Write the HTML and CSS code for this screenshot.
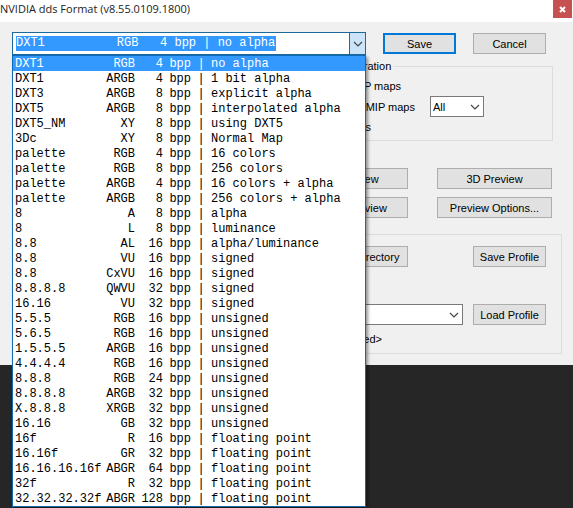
FILE: index.html
```html
<!DOCTYPE html>
<html lang="en">
<head>
    <meta charset="UTF-8">
    <meta name="viewport" content="width=device-width, initial-scale=1.0">
    <title>NVIDIA dds Format</title>
    <link rel="stylesheet" href="styles.css">
</head>
<body>
    <div class="dialog">
        <header class="title-bar">
            <h1>NVIDIA dds Format (v8.55.0109.1800)</h1>
            <button type="button" class="close-btn" aria-label="Close">
                <svg width="7" height="7" viewBox="0 0 7 7"><path d="M1 1L6 6M6 1L1 6" stroke="#fff" stroke-width="2"/></svg>
            </button>
        </header>

        <form class="dialog-body">
            <div class="top-row">
                <div class="combo">
                    <div class="combo-field">
                        <select class="format-select" aria-label="Texture format">
                            <option>DXT1&nbsp;&nbsp;&nbsp;&nbsp;&nbsp;&nbsp;&nbsp;&nbsp;&nbsp;&nbsp;RGB&nbsp;&nbsp;&nbsp;4&nbsp;bpp&nbsp;|&nbsp;no&nbsp;alpha</option>
                        </select>
                        <span class="combo-arrow">
                            <svg width="10" height="6" viewBox="0 0 10 6"><path d="M1 1L5 5L9 1" fill="none" stroke="#444" stroke-width="1.2"/></svg>
                        </span>
                    </div>
                    <ul class="format-list" id="format-list" role="listbox" aria-label="Texture formats"></ul>
                </div>
                <button type="submit" class="btn default-btn">Save</button>
                <button type="button" class="btn">Cancel</button>
            </div>

            <fieldset class="mip-group">
                <legend>MIP Map Generation</legend>
                <label class="mip-option generate"><input type="radio" name="mip" checked> Generate MIP maps</label>
                <div class="mip-row">
                    <label class="mip-option existing"><input type="radio" name="mip"> Use Existing MIP maps</label>
                    <select class="drop-select" aria-label="Number of MIP maps">
                        <option>All</option>
                    </select>
                </div>
                <label class="mip-option none"><input type="radio" name="mip"> No MIP maps</label>
            </fieldset>

            <div class="preview-grid">
                <button type="button" class="btn">2D Preview</button>
                <button type="button" class="btn">3D Preview</button>
                <button type="button" class="btn">Image Preview</button>
                <button type="button" class="btn">Preview Options...</button>
            </div>

            <section class="profile-group">
                <div class="profile-row">
                    <button type="button" class="btn directory-btn">Set Profile Directory</button>
                    <button type="button" class="btn">Save Profile</button>
                </div>
                <div class="profile-row load-row">
                    <select class="drop-select profile-select" aria-label="Profile"><option></option></select>
                    <button type="button" class="btn">Load Profile</button>
                </div>
                <p class="profile-status">&lt;no profile loaded&gt;</p>
            </section>
        </form>
    </div>

    <script src="script.js"></script>
</body>
</html>
```

FILE: styles.css
```css
body {
    margin: 0;
    min-height: 100vh;
    background-color: #262626;
    color: #000;
    font-family: "Liberation Sans", Arial, sans-serif;
    font-size: 11px;
}

button, select, input {
    font: inherit;
    color: inherit;
    box-sizing: border-box;
    margin: 0;
}

.dialog {
    background-color: #f0f0f0;
}

.title-bar {
    display: flex;
    justify-content: space-between;
    align-items: flex-start;
    height: 22px;
    padding-right: 1px;
    background-color: #fff;
}

.title-bar h1 {
    margin: 0;
    font-family: "Open Sans", "Noto Sans", sans-serif;
    font-size: 11px;
    font-weight: normal;
    line-height: 18px;
    color: #222;
}

.close-btn {
    display: flex;
    align-items: center;
    justify-content: center;
    width: 19px;
    height: 18px;
    padding: 0;
    border: none;
    background-color: #c75050;
}

.dialog-body {
    padding: 10px 11px 11px 12px;
}

.top-row {
    display: flex;
    align-items: center;
    gap: 17px;
    padding-right: 16px;
}

.btn {
    width: 73px;
    height: 21px;
    padding: 0;
    border: 1px solid #adadad;
    background-color: #e1e1e1;
}

.default-btn {
    border: 2px solid #0078d7;
}

/* format drop-down */
.combo {
    position: relative;
    flex: 1;
}

.combo-field {
    display: flex;
    align-items: center;
    justify-content: space-between;
    height: 23px;
    box-sizing: border-box;
    padding-left: 3px;
    border: 1px solid #1c6a9c;
    background-color: #fff;
}

.format-select {
    appearance: none;
    height: 15px;
    padding: 0;
    border: none;
    border-radius: 0;
    background-color: #3399ff;
    color: #fff;
    font-family: "Liberation Mono", "Courier New", monospace;
    font-size: 12px;
    line-height: 15px;
}

.combo-arrow {
    display: flex;
    align-items: center;
    justify-content: center;
    align-self: stretch;
    width: 15px;
    border-left: 1px solid #1c6a9c;
    background-color: #cce4f7;
}

.format-list {
    position: absolute;
    top: 100%;
    left: 0;
    right: 0;
    z-index: 1;
    margin: 0;
    padding: 0;
    border: 1px solid #0f6cb4;
    background-color: #fff;
    box-shadow: 2px 2px 3px rgba(0, 0, 0, 0.4);
    list-style: none;
    font-family: "Liberation Mono", "Courier New", monospace;
    font-size: 12px;
    line-height: 15px;
    white-space: nowrap;
}

.format-list li {
    display: grid;
    grid-template-columns: 88px 32px 28px 28px 20px 1fr;
    height: 15px;
    padding-left: 2px;
    line-height: 17px;
}

.format-list li.selected {
    background-color: #3399ff;
    color: #fff;
}

.channels, .bits, .unit {
    text-align: right;
}

.bar {
    text-align: center;
}

/* mip maps */
.mip-group {
    min-width: 0;
    margin: 5px 9px 0 281px;
    padding: 3px 8px 3px;
    border: 1px solid #dcdcdc;
}

.mip-group legend {
    padding: 0 2px;
    margin-left: -14px;
    line-height: 13px;
}

.mip-option {
    display: flex;
    align-items: center;
    justify-content: flex-end;
    gap: 4px;
    line-height: 20px;
    white-space: nowrap;
}

.mip-option input {
    width: 12px;
    height: 12px;
}

.generate {
    width: 99px;
}

.existing {
    width: 113px;
}

.none {
    width: 69px;
}

.mip-row {
    display: flex;
    gap: 15px;
}

.drop-select {
    appearance: none;
    width: 54px;
    height: 21px;
    padding: 0 2px;
    border: 1px solid #7a7a7a;
    border-radius: 0;
    background: #fff url("data:image/svg+xml,%3Csvg xmlns='http://www.w3.org/2000/svg' width='10' height='6'%3E%3Cpath d='M1 1L5 5L9 1' fill='none' stroke='%23444' stroke-width='1.2'/%3E%3C/svg%3E") no-repeat right 3px center;
}

/* previews */
.preview-grid {
    display: grid;
    grid-template-columns: 1fr 1fr;
    gap: 8px 29px;
    margin: 27px 10px 0 281px;
}

.preview-grid .btn {
    width: auto;
}

/* profile */
.profile-group {
    margin-top: 16px;
    padding: 11px 15px 6px;
    border: 1px solid #dcdcdc;
}

.profile-row {
    display: flex;
    justify-content: space-between;
    align-items: center;
}

.directory-btn {
    width: 115px;
    margin-left: 265px;
}

.load-row {
    gap: 10px;
    margin-top: 37px;
}

.profile-select {
    flex: 1;
}

.profile-status {
    width: 354px;
    margin: 6px 0 0;
    line-height: 16px;
    text-align: right;
}
```

FILE: script.js
```javascript
const formats = [
    ['DXT1', 'RGB', 4, 'no alpha'],
    ['DXT1', 'ARGB', 4, '1 bit alpha'],
    ['DXT3', 'ARGB', 8, 'explicit alpha'],
    ['DXT5', 'ARGB', 8, 'interpolated alpha'],
    ['DXT5_NM', 'XY', 8, 'using DXT5'],
    ['3Dc', 'XY', 8, 'Normal Map'],
    ['palette', 'RGB', 4, '16 colors'],
    ['palette', 'RGB', 8, '256 colors'],
    ['palette', 'ARGB', 4, '16 colors + alpha'],
    ['palette', 'ARGB', 8, '256 colors + alpha'],
    ['8', 'A', 8, 'alpha'],
    ['8', 'L', 8, 'luminance'],
    ['8.8', 'AL', 16, 'alpha/luminance'],
    ['8.8', 'VU', 16, 'signed'],
    ['8.8', 'CxVU', 16, 'signed'],
    ['8.8.8.8', 'QWVU', 32, 'signed'],
    ['16.16', 'VU', 32, 'signed'],
    ['5.5.5', 'RGB', 16, 'unsigned'],
    ['5.6.5', 'RGB', 16, 'unsigned'],
    ['1.5.5.5', 'ARGB', 16, 'unsigned'],
    ['4.4.4.4', 'RGB', 16, 'unsigned'],
    ['8.8.8', 'RGB', 24, 'unsigned'],
    ['8.8.8.8', 'ARGB', 32, 'unsigned'],
    ['X.8.8.8', 'XRGB', 32, 'unsigned'],
    ['16.16', 'GB', 32, 'unsigned'],
    ['16f', 'R', 16, 'floating point'],
    ['16.16f', 'GR', 32, 'floating point'],
    ['16.16.16.16f', 'ABGR', 64, 'floating point'],
    ['32f', 'R', 32, 'floating point'],
    ['32.32.32.32f', 'ABGR', 128, 'floating point']
];

const formatList = document.getElementById('format-list');

formats.forEach(([name, channels, bits, desc], index) => {
    const item = document.createElement('li');
    item.setAttribute('role', 'option');
    item.setAttribute('aria-selected', index === 0);
    if (index === 0) {
        item.classList.add('selected');
    }
    item.innerHTML = `<span>${name}</span><span class="channels">${channels}</span><span class="bits">${bits}</span><span class="unit">bpp</span><span class="bar">|</span><span>${desc}</span>`;
    formatList.appendChild(item);
});
```
